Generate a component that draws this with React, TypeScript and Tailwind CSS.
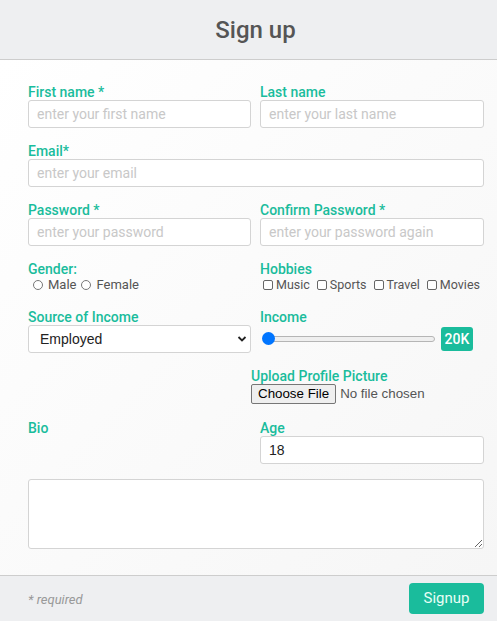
import { useState } from "react";

const label = "block text-[14px] leading-[16px] font-medium text-[#1abc9c]";
const field =
  "block w-full h-[28px] rounded-[3px] border border-[#d4d4d4] bg-white px-[8px] text-[14px] text-[#222] outline-none placeholder:text-[#c8c8c8]";
const row = "grid grid-cols-[223px_1fr] gap-x-[9px]";

function Radio({ text }: { text: string }) {
  return (
    <label className="flex items-center">
      <span className="ml-[5px] mr-[5px] h-[10px] w-[10px] rounded-full border border-[#777] bg-white" />
      <span>{text}</span>
    </label>
  );
}

function Check({ text }: { text: string }) {
  return (
    <label className="mr-[7px] flex items-center">
      <span className="mr-[3px] h-[10px] w-[10px] rounded-[2px] border border-[#666] bg-white" />
      <span>{text}</span>
    </label>
  );
}

export default function App() {
  const [age, setAge] = useState("18");

  return (
    <div className="flex h-[621px] w-full flex-col font-['Roboto',sans-serif]">
      <div className="flex h-[60px] shrink-0 items-center justify-center border-b border-[#cdcdcd] bg-[#eeeff1] pl-[14px]">
        <h1 className="text-[24px] font-medium text-[#555]">Sign up</h1>
      </div>

      <div className="flex-1 bg-gradient-to-br from-white to-[#f6f6f6] pl-[28px] pr-[13px] pt-[24px]">
        <div className={row}>
          <div>
            <label className={label}>First name *</label>
            <input className={field} placeholder="enter your first name" />
          </div>
          <div>
            <label className={label}>Last name</label>
            <input className={field} placeholder="enter your last name" />
          </div>
        </div>

        <div className="mt-[15px]">
          <label className={label}>Email*</label>
          <input className={field} placeholder="enter your email" />
        </div>

        <div className={"mt-[15px] " + row}>
          <div>
            <label className={label}>Password *</label>
            <input type="password" className={field} placeholder="enter your password" />
          </div>
          <div>
            <label className={label}>Confirm Password *</label>
            <input
              type="password"
              className={field}
              placeholder="enter your password again"
            />
          </div>
        </div>

        <div className={"mt-[15px] " + row}>
          <div>
            <label className={label}>Gender:</label>
            <div className="flex h-[16px] items-center text-[13px] text-[#555]">
              <Radio text="Male" />
              <Radio text="Female" />
            </div>
          </div>
          <div>
            <label className={label}>Hobbies</label>
            <div className="ml-[3px] flex h-[16px] items-center text-[12.5px] text-[#555]">
              <Check text="Music" />
              <Check text="Sports" />
              <Check text="Travel" />
              <Check text="Movies" />
            </div>
          </div>
        </div>

        <div className={"mt-[16px] " + row}>
          <div>
            <label className={label}>Source of Income</label>
            <div className="relative">
              <div className="flex h-[28px] items-center rounded-[3px] border border-[#d4d4d4] bg-white pl-[11px] font-['Liberation_Sans',sans-serif] text-[14px] text-[#222]">
                Employed
              </div>
              <svg
                className="absolute right-[4px] top-[10px]"
                width="10"
                height="8"
                viewBox="0 0 10 8"
              >
                <path d="M1.5 2 L5 5.5 L8.5 2" fill="none" stroke="#222" strokeWidth="1.8" />
              </svg>
            </div>
          </div>
          <div>
            <label className={label}>Income</label>
            <div className="flex h-[28px] items-center">
              <div className="relative ml-[3px] h-[6px] w-[172px] rounded-full border border-[#b5b5b5] bg-[#efefef]">
                <span className="absolute left-[-2px] top-[-5px] h-[13px] w-[13px] rounded-full bg-[#0075ff]" />
              </div>
              <span className="ml-[6px] flex h-[24px] w-[32px] items-center justify-center rounded-[3px] bg-[#1abc9c] text-[14px] font-medium text-white">
                20K
              </span>
            </div>
          </div>
        </div>

        <div className={"mt-[15px] " + row}>
          <div />
          <div className="ml-[-9px]">
            <label className={label}>Upload Profile Picture</label>
            <div className="flex items-center font-['Liberation_Sans',sans-serif] text-[13.33px]">
              <span className="flex h-[20px] items-center rounded-[2px] border border-[#767676] bg-[#efefef] px-[6px] text-black">
                Choose File
              </span>
              <span className="ml-[4px] text-[#555]">No file chosen</span>
            </div>
          </div>
        </div>

        <div className={"mt-[16px] " + row}>
          <div>
            <label className={label}>Bio</label>
          </div>
          <div>
            <label className={label}>Age</label>
            <input
              className={field + " font-['Liberation_Sans',sans-serif]"}
              value={age}
              onChange={(e) => setAge(e.target.value)}
            />
          </div>
        </div>

        <textarea className="mt-[15px] block h-[70px] w-full rounded-[3px] border border-[#d4d4d4] bg-white" />
      </div>

      <div className="flex h-[46px] shrink-0 items-center justify-between border-t border-[#cdcdcd] bg-[#eeeff1] pl-[28px] pr-[13px]">
        <span className="mt-[2px] text-[13px] italic text-[#999]">* required</span>
        <button className="h-[31px] w-[75px] rounded-[4px] bg-[#1abc9c] text-[15px] text-[#e8fff6]">
          Signup
        </button>
      </div>
    </div>
  );
}
